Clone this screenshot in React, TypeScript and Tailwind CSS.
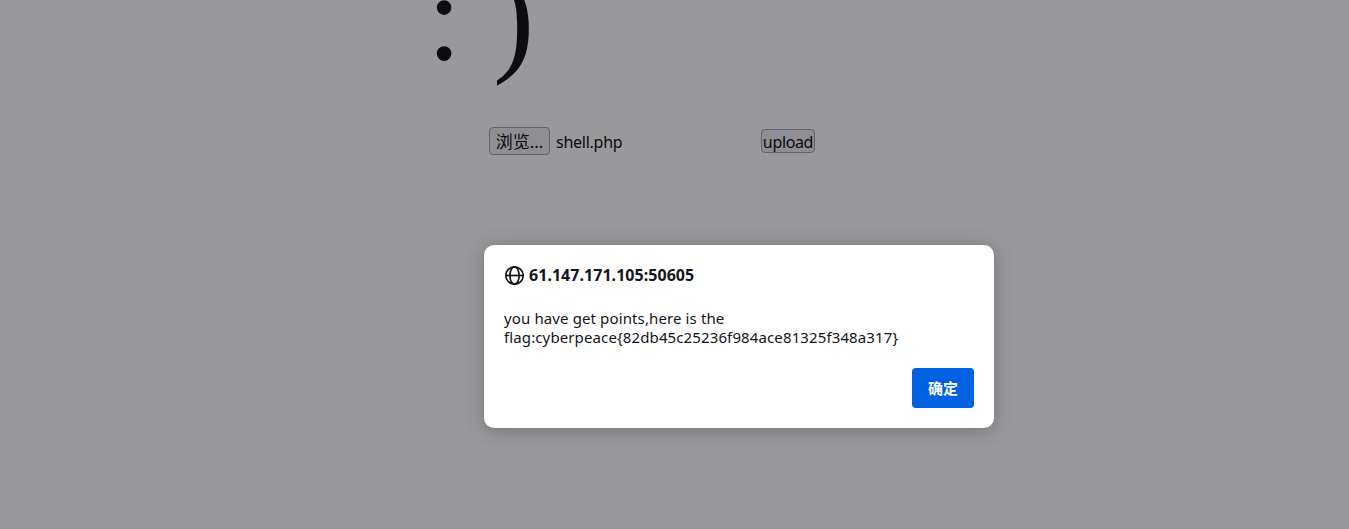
import React from "react";

function Globe() {
  return (
    <svg className="h-5 w-5 shrink-0" viewBox="0 0 20 20" fill="none" stroke="#15141a" strokeWidth="1.7">
      <circle cx="10.5" cy="10.5" r="8.7" />
      <ellipse cx="10.5" cy="10.5" rx="4.6" ry="8.7" />
      <path d="M1.8 10.5h17.4" />
    </svg>
  );
}

function UploadForm() {
  return (
    <form className="mt-[41px] flex h-7 items-center pl-[489px] text-[16px] leading-[22px] text-[#0a0a0d]">
      <button type="button" className="h-7 w-[61px] whitespace-nowrap rounded-[4px] border border-[#61616b] bg-[#8e8e93] pt-px text-center text-[17px]">
        浏览...
      </button>
      <span className="ml-[6px] w-[205px] pt-0.5 tracking-[-0.25px]">shell.php</span>
      <button type="button" className="flex h-6 w-[54px] items-center justify-center rounded-[4px] border border-[#61616b] bg-[#8e8e93] pt-0.5 tracking-[-0.35px]">
        upload
      </button>
    </form>
  );
}

function AlertDialog() {
  return (
    <div
      role="alertdialog"
      className="absolute left-[484px] top-[245px] flex h-[183px] w-[510px] flex-col rounded-[10px] bg-white p-5 text-[15px] text-[#15141a] shadow-[0_2px_18px_rgba(58,57,68,0.38)]"
    >
      <div className="flex h-5 items-center gap-[5px]">
        <Globe />
        <strong className="text-[16px] font-bold leading-5 tracking-[0.04px]">61.147.171.105:50605</strong>
      </div>
      <p className="mt-6 leading-[19px] tracking-[0.12px]">
        <span className="block">you have get points,here is the</span>
        <span className="block">flag:cyberpeace&#123;82db45c25236f984ace81325f348a317&#125;</span>
      </p>
      <button type="button" className="mt-auto h-10 w-[62px] self-end rounded-[4px] bg-[#0061e0] text-[15px] font-bold text-[#fbfbfe]">
        确定
      </button>
    </div>
  );
}

export default function App() {
  return (
    <main className="relative h-[529px] w-full overflow-hidden bg-[#99999b] font-['Noto_Sans','Noto_Sans_CJK_SC',sans-serif]">
      <div className="flex h-[86px] items-end pb-[14px] pl-[427px] font-['Liberation_Serif',serif] text-[124px] leading-[108px] text-[#0d0d10]">
        <span className="w-[66px]">:</span>
        <span>)</span>
      </div>
      <UploadForm />
      <AlertDialog />
    </main>
  );
}
